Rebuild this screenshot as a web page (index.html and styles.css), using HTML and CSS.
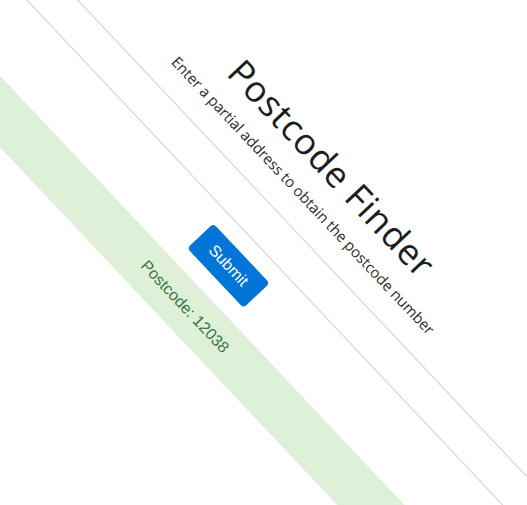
FILE: index.html
```html
<!DOCTYPE html>
<html lang="en">
<head>
<meta charset="utf-8">
<title>Postcode Finder</title>
<link rel="stylesheet" href="styles.css">
</head>
<body>
<div class="stage">
  <div class="page">
    <h1 class="title">Postcode Finder</h1>
    <p class="lead">Enter a partial address to obtain the postcode number</p>
    <input class="field" type="text" aria-label="Address">
    <button class="btn" type="button">Submit</button>
    <div class="alert">Postcode: 12038</div>
  </div>
</div>
</body>
</html>
```

FILE: styles.css
```css
html, body {
  margin: 0;
  padding: 0;
  overflow: hidden;
  background: #fff;
  width: 527px;
  height: 505px;
}

.stage {
  width: 1200px;
  transform-origin: 0 0;
  transform: translate(-25.89px, -319.11px) rotate(46.7deg);
}

.page {
  display: flex;
  flex-direction: column;
  align-items: center;
  padding-top: 52px;
  font-family: "Open Sans", "Noto Sans", sans-serif;
  color: #212529;
}

.title {
  margin: 0;
  font-size: 36px;
  line-height: 43.2px;
  font-weight: 400;
  letter-spacing: 0.8px;
  color: #1d1d1d;
}

.lead {
  margin: 6px 0 0;
  font-size: 15px;
  line-height: 24px;
  letter-spacing: -0.1px;
  color: #2a2a2a;
}

.field {
  box-sizing: border-box;
  margin-top: 18px;
  width: 100%;
  height: 38px;
  border: 1px solid #d0d0d0;
  border-radius: 4px;
  background: #fff;
}

.btn {
  box-sizing: border-box;
  margin-top: 17px;
  height: 36px;
  padding: 0 15px;
  border: 1px solid #0275d8;
  border-radius: 4px;
  background: #0275d8;
  color: #fff;
  font-family: "Liberation Sans", Arial, sans-serif;
  font-size: 16px;
  line-height: 24px;
}

.alert {
  box-sizing: border-box;
  margin-top: 18px;
  width: 100%;
  height: 49px;
  padding: 12px 20px;
  background: #dff0d8;
  color: #3c763d;
  text-align: center;
  font-family: "Liberation Sans", Arial, sans-serif;
  font-size: 16px;
  line-height: 24px;
}
```
